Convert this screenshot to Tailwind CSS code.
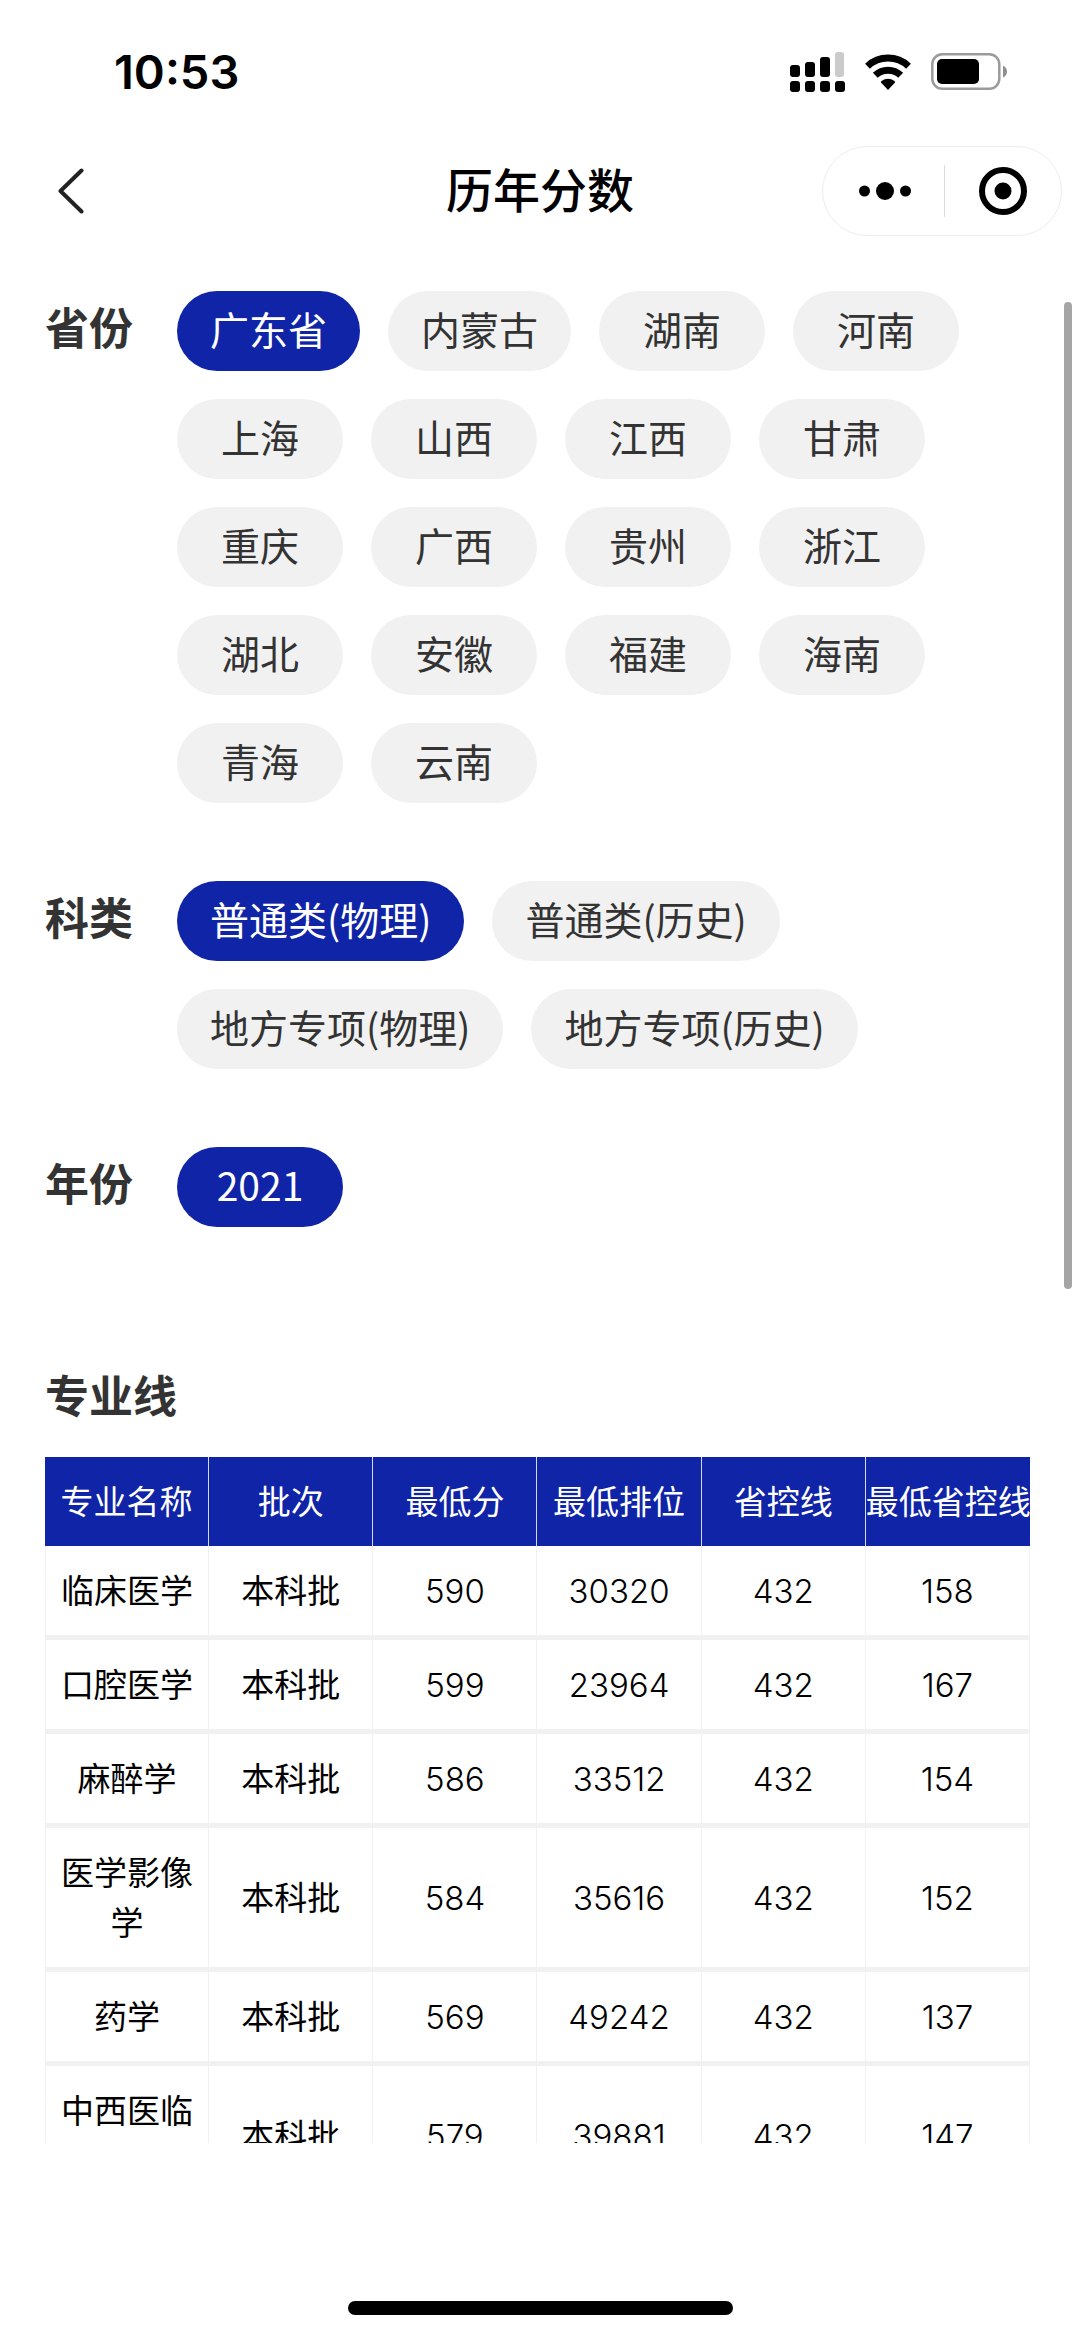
<!DOCTYPE html>
<html lang="zh-CN">
<head>
    <meta charset="UTF-8">
    <meta name="viewport" content="width=device-width, initial-scale=1.0">
    <title>历年分数</title>
    <script src="https://cdn.jsdelivr.net/npm/@tailwindcss/browser@4"></script>
</head>
<body class="h-screen flex flex-col bg-white text-black font-['Inter','Noto_Sans_CJK_SC',sans-serif]">

    <!-- Status bar -->
    <div class="shrink-0 h-[143px] flex items-center justify-between pl-[114px] pr-[73px]">
        <span class="text-[47px] leading-[60px] font-semibold">10:53</span>
        <div class="flex items-center gap-[20px]">
            <svg class="w-[55px] h-[40px]" viewBox="0 0 55 40" fill="#000" aria-label="信号">
                <rect x="0" y="13" width="10" height="12" rx="3"/>
                <rect x="15" y="10" width="10" height="15" rx="3"/>
                <rect x="30" y="5" width="10" height="20" rx="3"/>
                <rect x="45" y="0" width="9" height="25" rx="3" fill="#cbcbcb"/>
                <rect x="0" y="29" width="10" height="11" rx="3"/>
                <rect x="15" y="29" width="10" height="11" rx="3"/>
                <rect x="30" y="29" width="10" height="11" rx="3"/>
                <rect x="45" y="29" width="10" height="11" rx="3"/>
            </svg>
            <svg class="w-[46px] h-[36px]" viewBox="0 0 46 36" aria-label="Wi-Fi">
                <path d="M2.5 12.2A30 30 0 0 1 43.5 12.2" fill="none" stroke="#000" stroke-width="7"/>
                <path d="M10.3 21.2A18.5 18.5 0 0 1 35.7 21.2" fill="none" stroke="#000" stroke-width="7"/>
                <path d="M23 36L16 28.5Q15.6 27.5 16.5 27Q23 22.5 29.5 27Q30.4 27.5 30 28.5Z"/>
            </svg>
            <svg class="w-[76px] h-[37px]" viewBox="0 0 76 37" aria-label="电量">
                <rect x="1.3" y="1.3" width="67" height="34.4" rx="10" fill="none" stroke="#9b9b9b" stroke-width="2.5"/>
                <rect x="6" y="6" width="42" height="25" rx="5"/>
                <path d="M72 12.5Q76 14.5 76 18.5Q76 22.5 72 24.5Z" fill="#8f8f8f"/>
            </svg>
        </div>
    </div>

    <!-- Nav -->
    <header class="shrink-0 h-24 grid grid-cols-[1fr_auto_1fr] items-center px-[18px]">
        <button type="button" aria-label="返回" class="w-[105px] h-20 flex items-center justify-center">
            <svg class="w-[26px] h-[46px]" viewBox="0 0 26 46" fill="none" stroke="#222" stroke-width="4" stroke-linecap="round" stroke-linejoin="round">
                <path d="M23.5 2.5L2.5 23L23.5 43.5"/>
            </svg>
        </button>
        <h1 class="text-[47px] leading-[60px] font-medium">历年分数</h1>
        <div class="justify-self-end w-[240px] h-[90px] rounded-full border border-[#ededed] flex items-center">
            <button type="button" aria-label="更多" class="flex-1 h-full pl-1 flex items-center justify-center">
                <svg class="w-[52px] h-[18px]" viewBox="0 0 52 18">
                    <circle cx="5.5" cy="9" r="5.5"/>
                    <circle cx="26" cy="9" r="9"/>
                    <circle cx="46.5" cy="9" r="5.5"/>
                </svg>
            </button>
            <span class="w-px h-[52px] bg-[#dcdcdc]"></span>
            <button type="button" aria-label="关闭" class="flex-1 h-full flex items-center justify-center">
                <svg class="w-[48px] h-[48px]" viewBox="0 0 48 48">
                    <circle cx="24" cy="24" r="21" fill="none" stroke="#000" stroke-width="6"/>
                    <circle cx="24" cy="24" r="8.5"/>
                </svg>
            </button>
        </div>
    </header>

    <!-- Content -->
    <main class="relative flex-1 min-h-0 overflow-hidden pl-[45px] pr-[50px] pt-[52px]">
        <div class="space-y-[78px]">
            <section class="flex">
                <h2 class="w-[132px] shrink-0 text-[44px] leading-[76px] font-bold text-[#333]">省份</h2>
                <div id="province-list" class="flex flex-wrap gap-7"></div>
            </section>
            <section class="flex">
                <h2 class="w-[132px] shrink-0 text-[44px] leading-[76px] font-bold text-[#333]">科类</h2>
                <div id="subject-list" class="flex flex-wrap gap-7"></div>
            </section>
            <section class="flex">
                <h2 class="w-[132px] shrink-0 text-[44px] leading-[76px] font-bold text-[#333]">年份</h2>
                <div id="year-list" class="flex flex-wrap gap-7"></div>
            </section>
        </div>

        <h2 class="mt-[140px] mb-[30px] text-[44px] leading-[60px] font-bold text-[#333]">专业线</h2>
        <table class="w-full table-fixed border-separate border-spacing-0 text-center text-[33px] leading-[50px]">
            <thead>
                <tr class="bg-[#0f24a6] text-white">
                    <th class="pt-5 pb-[19px] font-normal whitespace-nowrap border-r border-[#d5d9f2]">专业名称</th>
                    <th class="pt-5 pb-[19px] font-normal whitespace-nowrap border-r border-[#d5d9f2]">批次</th>
                    <th class="pt-5 pb-[19px] font-normal whitespace-nowrap border-r border-[#d5d9f2]">最低分</th>
                    <th class="pt-5 pb-[19px] font-normal whitespace-nowrap border-r border-[#d5d9f2]">最低排位</th>
                    <th class="pt-5 pb-[19px] font-normal whitespace-nowrap border-r border-[#d5d9f2]">省控线</th>
                    <th class="pt-5 pb-[19px] font-normal whitespace-nowrap">最低省控线</th>
                </tr>
            </thead>
            <tbody id="score-rows"></tbody>
        </table>

        <span class="absolute right-2 top-[63px] w-2 h-[987px] rounded-full bg-[#a5a5a5]"></span>
    </main>

    <!-- Home indicator -->
    <footer class="shrink-0 h-[194px] flex items-end justify-center pb-[22px]">
        <span class="w-[385px] h-[14px] rounded-full bg-black"></span>
    </footer>

    <script>
        const provinces = ['广东省', '内蒙古', '湖南', '河南', '上海', '山西', '江西', '甘肃', '重庆', '广西', '贵州', '浙江', '湖北', '安徽', '福建', '海南', '青海', '云南'];
        const subjects = ['普通类(物理)', '普通类(历史)', '地方专项(物理)', '地方专项(历史)'];
        const years = ['2021'];
        const scores = [
            ['临床医学', '本科批', 590, 30320, 432, 158],
            ['口腔医学', '本科批', 599, 23964, 432, 167],
            ['麻醉学', '本科批', 586, 33512, 432, 154],
            ['医学影像学', '本科批', 584, 35616, 432, 152],
            ['药学', '本科批', 569, 49242, 432, 137],
            ['中西医临床医学', '本科批', 579, 39881, 432, 147]
        ];

        const pillOn = "min-w-[166px] h-20 px-[33px] pb-[6px] rounded-full font-['Noto_Sans_CJK_SC',sans-serif] text-[39px] leading-[60px] bg-[#0f24a6] text-white";
        const pillOff = "min-w-[166px] h-20 px-[33px] pb-[6px] rounded-full font-['Noto_Sans_CJK_SC',sans-serif] text-[39px] leading-[60px] bg-[#f1f1f1] text-[#333]";

        function renderPills(id, items, selected) {
            const list = document.getElementById(id);
            list.innerHTML = '';
            items.forEach(item => {
                const pill = document.createElement('button');
                pill.type = 'button';
                pill.textContent = item;
                pill.className = item === selected ? pillOn : pillOff;
                pill.setAttribute('aria-pressed', item === selected);
                pill.addEventListener('click', () => renderPills(id, items, item));
                list.appendChild(pill);
            });
        }

        function renderScores() {
            document.getElementById('score-rows').innerHTML = scores.map(row => `
                <tr>${row.map(cell => `<td class="${typeof cell === 'number' ? 'font-light' : 'font-normal'} pt-5 pb-[19px] border-r border-r-[#f1f1f1] border-b-5 border-b-[#f1f1f1] first:border-l first:border-l-[#f1f1f1]">${cell}</td>`).join('')}</tr>`).join('');
        }

        renderPills('province-list', provinces, provinces[0]);
        renderPills('subject-list', subjects, subjects[0]);
        renderPills('year-list', years, years[0]);
        renderScores();
    </script>
</body>
</html>
